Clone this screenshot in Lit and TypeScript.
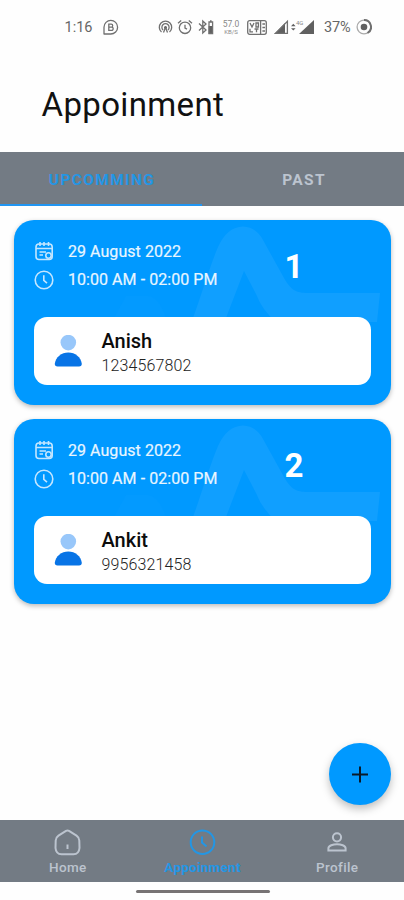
import { LitElement, html, css, svg } from "lit";
import { customElement, property } from "lit/decorators.js";

const clockFace = svg`
  <circle cx="10" cy="10" r="8.8"></circle>
  <path d="M9.8 5.2V10.4L13 13.2"></path>
`;

@customElement("status-bar")
class StatusBar extends LitElement {
  static styles = css`
    :host {
      display: flex;
      align-items: center;
      height: 54px;
      padding-left: 64.5px;
      color: #666;
      font-size: 14.5px;
    }
    svg { display: block; flex: none; fill: none; stroke: #707070; stroke-width: 1.3; }
    .solid { fill: #606060; stroke: none; }
    .time { width: 37.5px; }
    .chat { margin-right: 39px; }
    .hotspot { margin-right: 4px; }
    .alarm { margin-right: 5px; }
    .bt { margin-right: 7px; }
    .rate {
      display: flex;
      flex-direction: column;
      gap: 1px;
      width: 20px;
      margin-right: 6px;
      font-size: 8.5px;
      text-align: center;
      color: #888;
    }
    .rate span { line-height: 8px; }
    .rate small { font-size: 6px; line-height: 6px; }
    .volte { margin-right: 7px; }
    .signal { margin-right: 9px; }
    .pct { width: 32px; letter-spacing: -0.1px; }
    .net { font-size: 6px; fill: #888; stroke: none; }
  `;
  render() {
    return html`
      <span class="time">1:16</span>
      <svg class="chat" width="17" height="17" viewBox="0 0 17 17">
        <path d="M2 15.5V8.2a6.8 6.8 0 1 1 6.8 6.8H2"></path>
        <path d="M6.8 5.2h2.4a1.5 1.5 0 0 1 0 3H6.8zM6.8 8.2h2.8a1.6 1.6 0 0 1 0 3.2H6.8z"></path>
      </svg>
      <svg class="hotspot" width="15" height="16" viewBox="0 0 14 16">
        <path d="M3 13A6.2 6.2 0 1 1 11 13M4.6 11a3.6 3.6 0 1 1 4.8 0"></path>
        <circle class="solid" cx="7" cy="8.6" r="1.5"></circle>
        <path d="M7 8.6L5 13.4M7 8.6L9 13.4"></path>
      </svg>
      <svg class="alarm" width="16" height="16" viewBox="0 0 16 16">
        <circle cx="8" cy="8.8" r="5.7"></circle>
        <path d="M8 5.8v3.4l2 1M1 4.2L4.2 1.5M15 4.2L11.8 1.5"></path>
      </svg>
      <svg class="bt" width="16" height="16" viewBox="0 0 16 16">
        <path d="M1 4.5L8 11L4.8 14V2L8 5L1 11.5"></path>
        <rect class="solid" x="10.6" y="7" width="4.4" height="8"></rect>
        <path d="M11 14.5V3h3.6v11.5zM12 1.8h1.6"></path>
      </svg>
      <div class="rate"><span>57.0</span><small>KB/S</small></div>
      <svg class="volte" width="20" height="15" viewBox="0 0 20 15">
        <rect x="0.7" y="0.7" width="18.6" height="13.6" rx="2"></rect>
        <path d="M3 3l2 4 2-4M9 3h2.4v4H9zM3 8.8v3h3M7.5 9h4M9.5 9v3.2M13.6 1v13M15.4 4h2.6M15.4 7.5h2.6M15.4 11h2.6"></path>
      </svg>
      <svg class="signal" width="41" height="16" viewBox="0 0 41 16">
        <path class="solid" d="M0 15L11 4V15z"></path>
        <path d="M1.6 14.4L13.4 2.4V14.4z"></path>
        <path class="solid" d="M17 7.2l2.3-2.4 2.3 2.4zM17 9.2l2.3 2.4 2.3-2.4z"></path>
        <text class="net" x="22" y="6">4G</text>
        <path class="solid" d="M25 15L40 1V15z"></path>
      </svg>
      <span class="pct">37%</span>
      <svg width="16" height="16" viewBox="0 0 16 16">
        <circle cx="8" cy="8" r="6.9" stroke="#aaa"></circle>
        <path d="M8 1.1A6.9 6.9 0 0 1 11.5 14" stroke-width="2"></path>
        <circle class="solid" cx="8" cy="8" r="3.3"></circle>
      </svg>
    `;
  }
}

@customElement("appointment-card")
class AppointmentCard extends LitElement {
  @property() date = "";
  @property() time = "";
  @property() name = "";
  @property() phone = "";
  @property({ type: Number }) number = 0;

  static styles = css`
    :host {
      display: block;
      position: relative;
      box-sizing: border-box;
      height: 185px;
      padding: 21px 20px 0;
      border-radius: 20px;
      background: #0099ff;
      box-shadow: 0 2px 5px rgba(0, 0, 0, 0.27);
      overflow: hidden;
    }
    .wave { position: absolute; left: 0; top: 0; }
    .top { position: relative; display: flex; height: 76.5px; }
    .when { width: 251px; }
    .row {
      display: flex;
      align-items: center;
      height: 21px;
      margin-bottom: 7.5px;
      color: #e9f6ff;
      font-size: 16px;
      letter-spacing: 0.05px;
      -webkit-text-stroke: 0.2px #e9f6ff;
    }
    .row svg {
      width: 20px;
      height: 20px;
      margin-right: 14px;
      fill: none;
      stroke: #c4e6ff;
      stroke-width: 1.6;
    }
    .number {
      color: #fff;
      font-size: 33px;
      font-weight: 700;
      line-height: 38px;
      margin: 7px 0 0 -0.5px;
    }
    .person {
      position: relative;
      display: flex;
      align-items: center;
      height: 67.5px;
      border-radius: 13px;
      background: #fff;
    }
    .avatar { width: 28px; height: 32px; margin: 0 19.5px 0 20px; }
    .name { font-size: 20px; font-weight: 500; line-height: 24px; margin-top: 3px; color: #0c0c0c; }
    .phone {
      font-size: 16px;
      font-weight: 300;
      line-height: 20px;
      margin-top: 2.5px;
      color: #222;
      letter-spacing: 0.12px;
    }
  `;
  render() {
    return html`
      <svg class="wave" width="377" height="185" viewBox="0 0 377 185">
        <path fill="#109fff" d="M179 98C187 76 196 46 204 27Q213 7 229 6.500Q242 7 249 20L270 58C278 72 284 73 296 73H366L363 102H262Q248 90 242 74L230 51L212 98z"></path>
        <path fill="#039aff" d="M112 76H134Q145 77 152 98H100z"></path>
      </svg>
      <div class="top">
        <div class="when">
          <div class="row">
            <svg viewBox="0 0 20 20">
              <rect x="2" y="3" width="16.200" height="15.500" rx="3"></rect>
              <path d="M2 7.500H18M6 1V5M10 1V5M14.500 1V5M5.500 11H12M5.500 14H9"></path>
              <circle cx="14.500" cy="14.500" r="2.700"></circle>
            </svg>
            ${this.date}
          </div>
          <div class="row">
            <svg viewBox="0 0 20 20">${clockFace}</svg>
            ${this.time}
          </div>
        </div>
        <div class="number">${this.number}</div>
      </div>
      <div class="person">
        <svg class="avatar" viewBox="0 0 28 32">
          <circle cx="14.300" cy="7.600" r="7.800" fill="#98c7fa"></circle>
          <path d="M3.500 31.500Q0.800 31.500 0.800 28.800C1.500 22 7.500 17.400 14.300 17.400S27 22 27.800 28.800Q27.800 31.500 25 31.500z" fill="#0874e6"></path>
        </svg>
        <div>
          <div class="name">${this.name}</div>
          <div class="phone">${this.phone}</div>
        </div>
      </div>
    `;
  }
}

@customElement("app-root")
class AppRoot extends LitElement {
  static styles = css`
    :host {
      display: flex;
      flex-direction: column;
      position: relative;
      height: 900px;
      background: #fefefe;
      font-family: Roboto, "Liberation Sans", sans-serif;
      overflow: hidden;
    }
    h1 {
      margin: 0;
      height: 98px;
      padding-left: 41.5px;
      font-size: 33px;
      font-weight: 400;
      line-height: 101px;
      letter-spacing: 0.36px;
      color: #111;
    }
    .tabs { display: flex; height: 54px; background: #737b84; }
    .tab {
      flex: 1;
      box-sizing: border-box;
      border-bottom: 2.5px solid transparent;
      text-align: center;
      text-indent: 2px;
      font-size: 15.5px;
      font-weight: 700;
      line-height: 56px;
      letter-spacing: 1.35px;
      color: #bcc4cf;
    }
    .tab.active { color: #2396e4; border-color: #2196f3; }
    .list { flex: 1; display: flex; flex-direction: column; gap: 14px; padding: 13.5px 13px 0 14px; }
    .fab {
      position: absolute;
      left: 329px;
      top: 743px;
      width: 62px;
      height: 62px;
      border-radius: 50%;
      background: #0099ff;
      box-shadow: 0 4px 8px rgba(0, 0, 0, 0.25);
    }
    .fab svg { display: block; }
    .nav { display: flex; height: 62px; background: #737b84; }
    .item {
      flex: 1;
      display: flex;
      flex-direction: column;
      align-items: center;
      padding-top: 9px;
      text-indent: 1px;
      font-size: 13.5px;
      font-weight: 500;
      line-height: 16px;
      letter-spacing: 0.4px;
      color: #bcc4cf;
    }
    .item.active { color: #2396e4; font-weight: 700; letter-spacing: 0.25px; }
    .item svg { width: 27px; height: 27px; margin-bottom: 3px; fill: none; stroke: currentColor; stroke-width: 2; }
    .gesture { display: flex; justify-content: center; height: 18px; align-items: center; }
    .pill { width: 134px; height: 3px; border-radius: 2px; background: #777374; margin-left: 1px; }
  `;
  render() {
    return html`
      <status-bar></status-bar>
      <h1>Appoinment</h1>
      <div class="tabs">
        <div class="tab active">UPCOMMING</div>
        <div class="tab">PAST</div>
      </div>
      <div class="list">
        <appointment-card date="29 August 2022" time="10:00 AM - 02:00 PM" number="1" name="Anish" phone="1234567802"></appointment-card>
        <appointment-card date="29 August 2022" time="10:00 AM - 02:00 PM" number="2" name="Ankit" phone="9956321458"></appointment-card>
      </div>
      <div class="nav">
        <div class="item">
          <svg viewBox="0 0 27 27">
            <path d="M12 1.800Q13.500 1 15 1.800L22.500 6.600Q25.200 8.500 25.300 11.500L25.500 19Q25 25 19.500 25.300H7.500Q2 25 1.500 19L1.700 11.500Q1.800 8.500 4.500 6.600z"></path>
            <path d="M13.500 15.500V20"></path>
          </svg>
          Home
        </div>
        <div class="item active">
          <svg viewBox="0 0 27 27">
            <circle cx="13.500" cy="13.200" r="11.800"></circle>
            <path d="M13 7.500V13.500L17.500 17.500"></path>
          </svg>
          Appoinment
        </div>
        <div class="item">
          <svg viewBox="0 0 27 27">
            <circle cx="14" cy="8.300" r="4.100"></circle>
            <path d="M5.400 21.600V19.200C5.400 16.600 10.200 15.300 14 15.300S22.600 16.600 22.600 19.200V21.600z"></path>
          </svg>
          Profile
        </div>
      </div>
      <div class="gesture"><div class="pill"></div></div>
      <div class="fab">
        <svg width="62" height="62" viewBox="0 0 62 62">
          <path d="M31 23.500V39.500M23 31.500H39" stroke="#0a1a2a" stroke-width="2"></path>
        </svg>
      </div>
    `;
  }
}
